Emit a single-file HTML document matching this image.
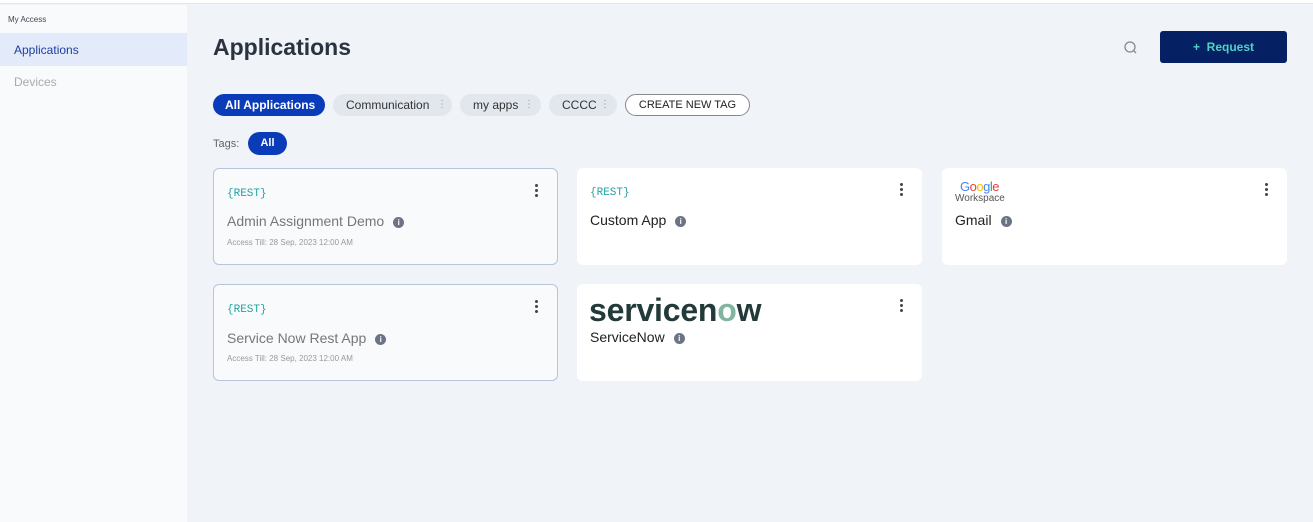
<!DOCTYPE html>
<html><head><style>
*{box-sizing:border-box;margin:0;padding:0}
body{width:1313px;height:522px;overflow:hidden;font-family:"Liberation Sans",sans-serif;background:#f0f3f8;position:relative}
.top{position:absolute;left:0;top:0;width:1313px;height:4px;background:#fff;border-bottom:1px solid #e3e7ee}
.side{position:absolute;left:0;top:5px;width:187px;height:517px;background:#f8fafc}
.abs{position:absolute}
.chip{position:absolute;top:94px;height:22px;border-radius:11px;background:#e2e7ee;color:#333;font-size:12px;line-height:22px;padding-left:13px}
.dots{position:absolute;color:#999;font-size:10px}
.card{position:absolute;width:345px;height:97px;background:#fff;border-radius:6px}
.card.b{background:#f8fafc;border:1px solid #b9c4da}
.rest{position:absolute;left:13px;top:19px;font-family:"Liberation Mono",monospace;font-size:11px;color:#23a3a3}
.name{position:absolute;left:13px;font-size:14px;color:#222}
.b .name{color:#777}
.info{display:inline-block;width:11px;height:11px;border-radius:50%;background:#6b7385;color:#fff;font-size:8px;line-height:11px;text-align:center;font-weight:bold;margin-left:9px;vertical-align:1px}
.acc{position:absolute;left:13px;top:69px;font-size:8px;color:#999}
.kebab{position:absolute;right:19px;top:15px;width:3px}
.kebab i{display:block;width:3px;height:3px;border-radius:50%;background:#444;margin-bottom:2px}
</style></head><body>
<div class="top"></div>
<div class="side">
<div class="abs" style="left:8px;top:10px;font-size:8px;color:#445">My Access</div>
<div class="abs" style="left:0;top:28px;width:187px;height:33px;background:#e3ebfa"></div>
<div class="abs" style="left:14px;top:38px;font-size:12px;color:#1d3fa0">Applications</div>
<div class="abs" style="left:14px;top:70px;font-size:12px;color:#aaa">Devices</div>
</div>
<div class="abs" style="left:213px;top:34px;font-size:23px;font-weight:bold;color:#2b3340">Applications</div>
<svg class="abs" style="left:1123px;top:40px" width="15" height="15" viewBox="0 0 15 15"><circle cx="7" cy="7" r="5" fill="none" stroke="#888" stroke-width="1.3"/><path d="M11 11l2 2" stroke="#888" stroke-width="1.3"/></svg>
<div class="abs" style="left:1160px;top:31px;width:127px;height:32px;background:#062163;border-radius:3px;color:#4ed2c4;font-size:12px;font-weight:bold;line-height:32px;text-align:center">+&nbsp; Request</div>
<div class="chip" style="left:213px;width:112px;background:#0a3bb8;color:#fff;font-weight:bold;padding-left:12px">All Applications</div>
<div class="chip" style="left:333px;width:119px">Communication <span class="dots" style="left:104px">⋮</span></div>
<div class="chip" style="left:460px;width:81px">my apps <span class="dots" style="left:64px">⋮</span></div>
<div class="chip" style="left:549px;width:68px">CCCC <span class="dots" style="left:51px">⋮</span></div>
<div class="abs" style="left:625px;top:94px;width:125px;height:22px;border:1px solid #888;border-radius:11px;background:#fff;font-size:11px;line-height:20px;text-align:center;color:#222">CREATE NEW TAG</div>
<div class="abs" style="left:213px;top:138px;font-size:11px;color:#666">Tags:</div>
<div class="abs" style="left:248px;top:132px;width:39px;height:23px;background:#0a3bb8;border-radius:12px;color:#fff;font-size:11px;font-weight:bold;line-height:23px;text-align:center">All</div>

<div class="card b" style="left:213px;top:168px"><div class="rest">{REST}</div><div class="name" style="top:44px">Admin Assignment Demo<span class="info">i</span></div><div class="acc">Access Till: 28 Sep, 2023 12:00 AM</div><div class="kebab"><i></i><i></i><i></i></div></div>
<div class="card" style="left:577px;top:168px"><div class="rest">{REST}</div><div class="name" style="top:44px">Custom App<span class="info">i</span></div><div class="kebab"><i></i><i></i><i></i></div></div>
<div class="card" style="left:942px;top:168px"><div class="abs" style="left:18px;top:11px;font-size:13px;letter-spacing:-0.5px"><span style="color:#4285f4">G</span><span style="color:#ea4335">o</span><span style="color:#fbbc05">o</span><span style="color:#4285f4">g</span><span style="color:#34a853">l</span><span style="color:#ea4335">e</span></div><div class="abs" style="left:13px;top:25px;font-size:10px;color:#555">Workspace</div><div class="name" style="top:44px">Gmail<span class="info">i</span></div><div class="kebab"><i></i><i></i><i></i></div></div>
<div class="card b" style="left:213px;top:284px"><div class="rest">{REST}</div><div class="name" style="top:45px">Service Now Rest App<span class="info">i</span></div><div class="acc">Access Till: 28 Sep, 2023 12:00 AM</div><div class="kebab"><i></i><i></i><i></i></div></div>
<div class="card" style="left:577px;top:284px"><div class="abs" style="left:12px;top:8px;font-size:32px;font-weight:bold;color:#233a3a;letter-spacing:-0.2px;line-height:36px">servicen<span style="color:#81b5a1">o</span>w</div><div class="name" style="top:45px">ServiceNow<span class="info">i</span></div><div class="kebab"><i></i><i></i><i></i></div></div>
</body></html>
